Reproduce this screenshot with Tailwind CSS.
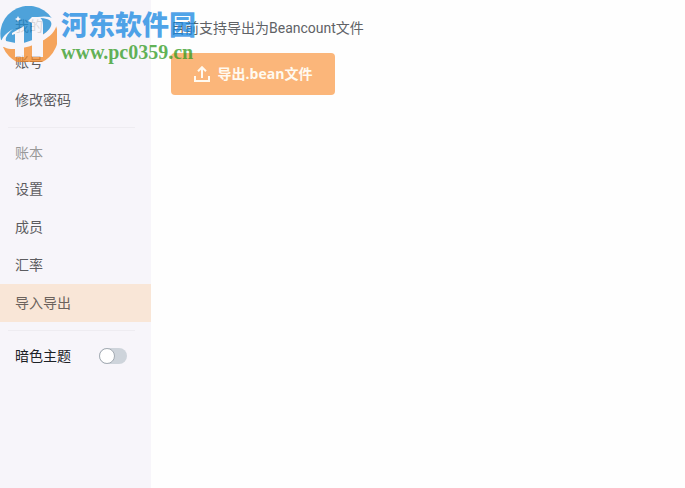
<!DOCTYPE html>
<html lang="zh-CN">
<head>
  <meta charset="UTF-8" />
  <meta name="viewport" content="width=device-width, initial-scale=1.0" />
  <title>导入导出</title>
  <script src="https://cdn.jsdelivr.net/npm/@tailwindcss/browser@4"></script>
</head>
<body class="relative flex min-h-screen bg-[#fefefe] font-['Open_Sans','Noto_Sans_CJK_SC',sans-serif] text-sm text-[#606266]">
  <aside class="w-[151px] shrink-0 bg-[#f7f5fa] pt-[9px]">
    <nav>
      <h2 class="flex h-[34px] items-center px-[15px] text-[#777]">我的</h2>
      <a href="#" class="flex h-[38px] items-center px-[15px] text-[#5c5c60]">账号</a>
      <a href="#" class="flex h-[38px] items-center px-[15px] text-[#5c5c60]">修改密码</a>
      <hr class="my-2 mr-4 ml-2 border-[#eeecf1]" />
      <h2 class="flex h-[34px] items-center px-[15px] text-[#999]">账本</h2>
      <a href="#" class="flex h-[38px] items-center px-[15px] text-[#5c5c60]">设置</a>
      <a href="#" class="flex h-[38px] items-center px-[15px] text-[#5c5c60]">成员</a>
      <a href="#" class="flex h-[38px] items-center px-[15px] text-[#5c5c60]">汇率</a>
      <a href="#" class="flex h-[38px] items-center bg-[#f9e6d7] px-[15px] text-[#6b625c]">导入导出</a>
      <hr class="my-2 mr-4 ml-2 border-[#eeecf1]" />
    </nav>
    <label class="flex h-[34px] items-center justify-between pr-6 pl-[15px] text-[#1c2126]">
      暗色主题
      <input type="checkbox" role="switch" class="h-4 w-7 appearance-none rounded-full bg-[#ced4db] before:block before:size-4 before:rounded-full before:border before:border-[#a4abb3] before:bg-white checked:bg-[#fbb67a] checked:before:ml-3" />
    </label>
  </aside>

  <main class="flex-1 px-5 pt-[18px]">
    <p class="font-[Roboto,'Noto_Sans_CJK_SC',sans-serif] leading-5">目前支持导出为Beancount文件</p>
    <button type="button" class="mt-[15px] flex h-[42px] w-[164px] items-center justify-center gap-2 rounded bg-[#fbb67a] font-bold text-[#fffaf0]">
      <svg class="size-4" viewBox="0 0 16 16" fill="none" stroke="currentColor" stroke-width="2">
        <path d="M1 10v5h14v-5M8 12V1.6M4 5.2l4-4 4 4" />
      </svg>
      导出.bean文件
    </button>
  </main>

  <!-- site watermark -->
  <div class="pointer-events-none absolute top-[6px] left-0 flex gap-1">
    <svg class="h-14 w-[57px] opacity-75" viewBox="0 0 57 56">
      <path fill="#1687d0" d="M1 34A28 28 0 1 1 56 22L30 40Z" />
      <path fill="#f58a28" d="M3 41L30 37L56 20A28 28 0 0 1 3 41Z" />
      <!-- towers and their lower stems -->
      <path fill="#f7f5fa" d="M12 27L24 20V51H15V28L12 29ZM28 15L32 11H38C42 12 43 15 43 19V51H32V17Z" />
      <path fill="#1687d0" d="M24 28H32V37H24Z" />
      <!-- ring -->
      <path fill="#f7f5fa" d="M38 11C51 9 58 13 56 21C52 34 26 44 11 43C-3 42 -2 32 13 23C4 31 3 37 12 38C26 39 48 29 51 20C53 14 47 12 38 12Z" />
      <path fill="#f7f5fa" d="M18 10l1 2 2 1-2 1-1 2-1-2-2-1 2-1Z" />
    </svg>
    <div class="pt-[2px]">
      <div class="font-['Noto_Sans_CJK_SC',sans-serif] text-[27px] leading-8 font-black text-[#1687e1]/75">河东软件园</div>
      <div class="font-['Liberation_Serif',serif] text-[20px] leading-6 font-bold text-[#2f9a20]/75">www.pc0359.cn</div>
    </div>
  </div>
</body>
</html>
